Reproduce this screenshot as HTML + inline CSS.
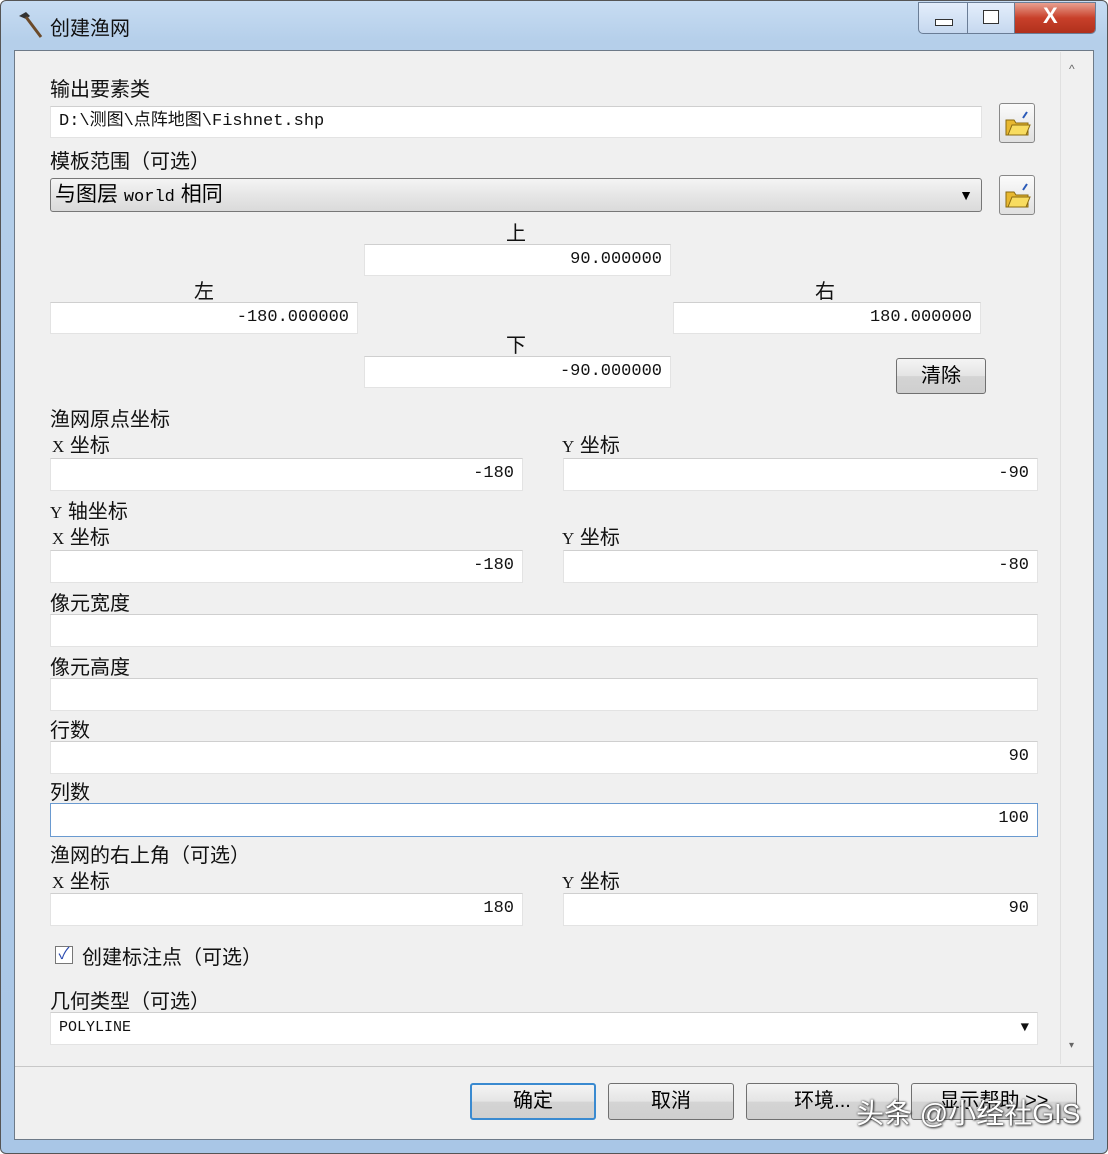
<!DOCTYPE html>
<html><head><meta charset="utf-8"><style>
body{margin:0;width:1108px;height:1154px;overflow:hidden;background:#fff;font-family:"Liberation Sans","Noto Sans CJK SC",sans-serif;}
.a{position:absolute}
.win{left:0;top:0;width:1106px;height:1152px;border:1px solid #555;border-radius:6px;background:linear-gradient(#c7dcf2,#b5cfea 40px,#a9c6e6);}
.panel{left:14px;top:50px;width:1078px;height:1088px;background:#f0f0f0;border:1px solid #6d7a88;}
.lbl{font-size:20px;color:#111;white-space:nowrap;margin-top:-3px}
.inp{background:#fff;border:1px solid #e3e3e3;border-top-color:#cfcfcf;box-sizing:border-box;font-family:"Liberation Mono","Noto Sans CJK SC",monospace;font-size:17px;color:#111;text-align:right;padding:0 8px;line-height:30px}
.btn{border:1px solid #707070;border-radius:3px;background:linear-gradient(#f4f4f4,#e4e4e4 50%,#d4d4d4 51%,#cfcfcf);box-sizing:border-box;text-align:center;font-size:20px;line-height:34px}
.fold{width:36px;height:40px;border:1px solid #888;border-radius:3px;background:linear-gradient(#fbfbfb,#e0e0e0);box-sizing:border-box}
.xy{font-family:"Liberation Serif",serif;font-size:17px}
</style></head><body>
<div class="a win"></div>
<svg class="a" style="left:14px;top:10px" width="30" height="30"><path d="M5 6 L12 2 L16 6 L12 9 Z" fill="#333"/><path d="M12 7 L27 27" stroke="#6b4a2a" stroke-width="3"/></svg>
<div class="a lbl" style="left:50px;top:15px;font-size:20px">创建渔网</div>
<div class="a" style="left:918px;top:2px;width:176px;height:30px;border:1px solid #6a7d96;border-radius:0 0 5px 5px;background:linear-gradient(#e4eefb,#c6d8ef);overflow:hidden">
<div class="a" style="left:96px;top:0;width:80px;height:30px;background:linear-gradient(#e8a090,#c8402a 50%,#b0301c)"></div>
<div class="a" style="left:48px;top:0;width:1px;height:30px;background:#6a7d96"></div>
<div class="a" style="left:95px;top:0;width:1px;height:30px;background:#6a7d96"></div>
<div class="a" style="left:16px;top:16px;width:16px;height:5px;border:1px solid #333;background:#fff"></div>
<div class="a" style="left:64px;top:7px;width:14px;height:12px;border:1px solid #333;background:#fff"></div>
<div class="a" style="left:124px;top:0;color:#fff;font-weight:bold;font-size:22px">X</div>
</div>
<div class="a panel"></div>
<div class="a" style="left:15px;top:1066px;width:1078px;height:1px;background:#c8c8c8"></div>
<div class="a" style="left:1060px;top:52px;width:1px;height:1012px;background:#e0e0e0"></div>
<div class="a" style="left:1069px;top:62px;font-size:12px;color:#666">^</div>
<div class="a" style="left:1069px;top:1040px;font-size:10px;color:#666">▾</div>

<div class="a lbl" style="left:50px;top:76px">输出要素类</div>
<div class="a inp" style="left:50px;top:106px;width:932px;height:32px;text-align:left">D:\测图\点阵地图\Fishnet.shp</div>
<div class="a fold" style="left:999px;top:103px"></div>
<div class="a fold" style="left:999px;top:175px"></div>
<svg class="a" style="left:1003px;top:108px" width="30" height="30"><path d="M3 12h8l2 3h12v12H3z" fill="#e8b830" stroke="#8a6a10"/><path d="M5 27l4-10h18l-4 10z" fill="#f8dc60" stroke="#8a6a10"/><path d="M20 10l4-6" stroke="#2a5ab8" stroke-width="2"/></svg>
<svg class="a" style="left:1003px;top:180px" width="30" height="30"><path d="M3 12h8l2 3h12v12H3z" fill="#e8b830" stroke="#8a6a10"/><path d="M5 27l4-10h18l-4 10z" fill="#f8dc60" stroke="#8a6a10"/><path d="M20 10l4-6" stroke="#2a5ab8" stroke-width="2"/></svg>
<div class="a lbl" style="left:50px;top:148px">模板范围（可选）</div>
<div class="a" style="left:50px;top:178px;width:932px;height:34px;border:1px solid #777;border-radius:3px;box-sizing:border-box;background:linear-gradient(#f4f4f4,#e6e6e6 50%,#dadada);font-size:21px;line-height:32px;padding-left:4px">与图层 <span style="font-family:'Liberation Mono';font-size:17px">world</span> 相同<span style="position:absolute;right:8px;font-size:14px">▼</span></div>

<div class="a lbl" style="left:506px;top:220px">上</div>
<div class="a inp" style="left:364px;top:244px;width:307px;height:32px">90.000000</div>
<div class="a lbl" style="left:194px;top:278px">左</div>
<div class="a inp" style="left:50px;top:302px;width:308px;height:32px">-180.000000</div>
<div class="a lbl" style="left:815px;top:278px">右</div>
<div class="a inp" style="left:673px;top:302px;width:308px;height:32px">180.000000</div>
<div class="a lbl" style="left:506px;top:332px">下</div>
<div class="a inp" style="left:364px;top:356px;width:307px;height:32px">-90.000000</div>
<div class="a btn" style="left:896px;top:358px;width:90px;height:36px">清除</div>

<div class="a lbl" style="left:50px;top:406px">渔网原点坐标</div>
<div class="a lbl" style="left:52px;top:432px"><span class="xy">X</span> 坐标</div>
<div class="a lbl" style="left:562px;top:432px"><span class="xy">Y</span> 坐标</div>
<div class="a inp" style="left:50px;top:458px;width:473px;height:33px">-180</div>
<div class="a inp" style="left:563px;top:458px;width:475px;height:33px">-90</div>
<div class="a lbl" style="left:50px;top:498px"><span class="xy">Y</span> 轴坐标</div>
<div class="a lbl" style="left:52px;top:524px"><span class="xy">X</span> 坐标</div>
<div class="a lbl" style="left:562px;top:524px"><span class="xy">Y</span> 坐标</div>
<div class="a inp" style="left:50px;top:550px;width:473px;height:33px">-180</div>
<div class="a inp" style="left:563px;top:550px;width:475px;height:33px">-80</div>
<div class="a lbl" style="left:50px;top:590px">像元宽度</div>
<div class="a inp" style="left:50px;top:614px;width:988px;height:33px"></div>
<div class="a lbl" style="left:50px;top:654px">像元高度</div>
<div class="a inp" style="left:50px;top:678px;width:988px;height:33px"></div>
<div class="a lbl" style="left:50px;top:717px">行数</div>
<div class="a inp" style="left:50px;top:741px;width:988px;height:33px">90</div>
<div class="a lbl" style="left:50px;top:779px">列数</div>
<div class="a inp" style="left:50px;top:803px;width:988px;height:34px;border-color:#6a9ad0">100</div>
<div class="a lbl" style="left:50px;top:842px">渔网的右上角（可选）</div>
<div class="a lbl" style="left:52px;top:868px"><span class="xy">X</span> 坐标</div>
<div class="a lbl" style="left:562px;top:868px"><span class="xy">Y</span> 坐标</div>
<div class="a inp" style="left:50px;top:893px;width:473px;height:33px">180</div>
<div class="a inp" style="left:563px;top:893px;width:475px;height:33px">90</div>
<div class="a" style="left:55px;top:946px;width:18px;height:18px;border:1px solid #777;background:#fff;box-sizing:border-box;color:#2a4ab0;font-size:16px;line-height:16px;text-align:center">✓</div>
<div class="a lbl" style="left:82px;top:944px">创建标注点（可选）</div>
<div class="a lbl" style="left:50px;top:988px">几何类型（可选）</div>
<div class="a inp" style="left:50px;top:1012px;width:988px;height:33px;text-align:left;font-size:15px">POLYLINE<span style="position:absolute;right:8px;font-size:14px">▼</span></div>

<div class="a btn" style="left:470px;top:1083px;width:126px;height:37px;border:2px solid #3a8ad0;line-height:33px">确定</div>
<div class="a btn" style="left:608px;top:1083px;width:126px;height:37px">取消</div>
<div class="a btn" style="left:746px;top:1083px;width:153px;height:37px">环境...</div>
<div class="a btn" style="left:911px;top:1083px;width:166px;height:37px">显示帮助 &gt;&gt;</div>
<div class="a" style="left:856px;top:1092px;font-size:28px;color:#fff;text-shadow:0 0 2px #333,1px 1px 2px #333;white-space:nowrap">头条 @小经社GIS</div>
</body></html>
